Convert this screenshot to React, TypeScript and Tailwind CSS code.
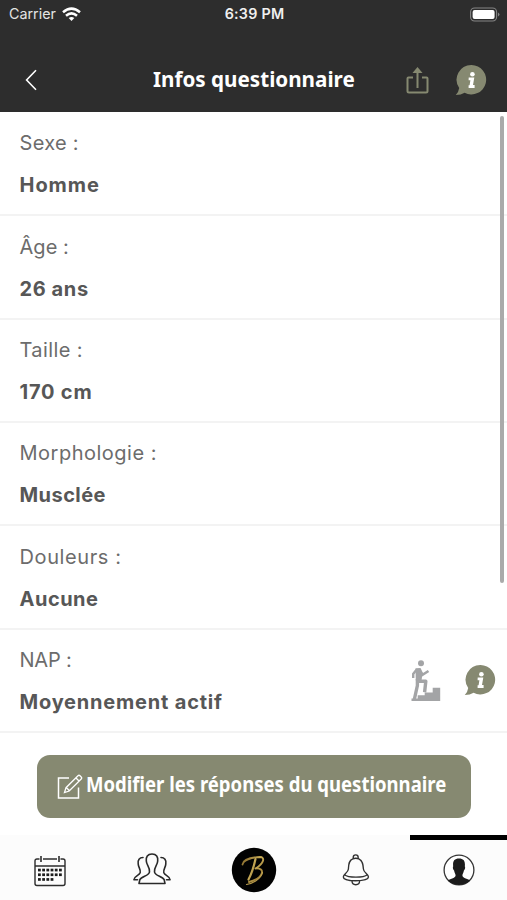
import React from "react";

const rows = [
  { label: "Sexe :", value: "Homme", lt: "tracking-[0.3px]", vt: "tracking-[0.95px]" },
  { label: "Âge :", value: "26 ans", lt: "tracking-[0.05px]", vt: "tracking-[0.6px]" },
  { label: "Taille :", value: "170 cm", lt: "tracking-[0.4px]", vt: "tracking-[0.8px]" },
  { label: "Morphologie :", value: "Musclée", lt: "tracking-[0.5px]", vt: "tracking-[0.45px]" },
  { label: "Douleurs :", value: "Aucune", lt: "tracking-[0.6px]", vt: "tracking-[0.5px]" },
  { label: "NAP :", value: "Moyennement actif", lt: "tracking-[-0.2px]", vt: "tracking-[0.8px]", icons: true },
];

function InfoBubble() {
  return (
    <svg width="32" height="32" viewBox="0 0 32 32" className="shrink-0">
      <path d="M16.5 1A14.7 14.7 0 1 1 9.6 28.7Q6 31 .8 31Q3.7 28 4.2 24A14.7 14.7 0 0 1 16.5 1Z" fill="#868971" />
      <g fill="#fff">
        <circle cx="17.4" cy="10.2" r="2.3" />
        <path d="M13.7 13.4h5.6l-1.3 7.7h1.6v2.8h-6v-2.6h1l.8-5.1h-1.8z" />
      </g>
    </svg>
  );
}

function StatusBar() {
  return (
    <div className="grid h-7 grid-cols-3 items-center pl-[9px] pr-[7px] text-[14px] leading-[28px] text-white">
      <div className="flex items-center gap-[6px]">
        <span className="text-[14.3px] text-[#e4e4e4]">Carrier</span>
        <svg width="19" height="15" viewBox="0 0 19 15" fill="none" stroke="#fff" strokeWidth="2.5">
          <path d="M1 5.2Q9.5-2 18 5.2" />
          <path d="M4 8.8q5.5-4.8 11 0" />
          <path d="M6.7 11.1Q9.5 8.8 12.3 11.1L9.5 14z" fill="#fff" stroke="none" />
        </svg>
      </div>
      <span className="text-center text-[14.3px] font-semibold tracking-[0.25px] text-[#f0f0f0]">6:39 PM</span>
      <svg className="justify-self-end" width="30" height="15" viewBox="0 0 30 15">
        <rect x=".6" y="1" width="26" height="13" rx="4" fill="none" stroke="#858585" strokeWidth="1.1" />
        <rect x="2.6" y="3" width="22" height="9" rx="2" fill="#fff" />
        <path d="M28 5.5q3 2 0 4z" fill="#858585" />
      </svg>
    </div>
  );
}

function NavBar() {
  return (
    <div className="flex h-[84px] items-start pt-[33px]">
      <svg className="ml-[25px] mt-[7px]" width="13" height="24" viewBox="0 0 13 24" fill="none" stroke="#fff" strokeWidth="1.6">
        <path d="M11 2.3L1.6 12 11 21.7" />
      </svg>
      <h1 className="ml-[115px] w-[202px] whitespace-nowrap font-['Noto_Sans'] text-[22px] font-bold leading-[34px] text-white">
        <span className="inline-block origin-left scale-x-[0.938]">Infos questionnaire</span>
      </h1>
      <svg className="ml-[51px] mt-[5px]" width="23" height="29" viewBox="0 0 23 29" fill="none" stroke="#868971" strokeWidth="2">
        <path d="M7 11.5H2.5q-1 0-1 1V25q0 1.5 1.5 1.5h17q1.5 0 1.5-1.5V12.5q0-1-1-1H16M11.5 22V3" />
        <path d="M6.5 7l5-6 5 6z" fill="#868971" stroke="none" />
      </svg>
      <div className="ml-[26px] mt-[3px]"><InfoBubble /></div>
    </div>
  );
}

function StairsClimber() {
  return (
    <svg width="30" height="42" viewBox="0 0 30 42" fill="none" stroke="#a3a4a6">
      <circle cx="10" cy="3.2" r="3" fill="#a3a4a6" stroke="none" />
      <path d="M5.5 9.8L2.2 14v4" strokeWidth="2.4" />
      <path d="M9 11.5L11.5 14.8 17.5 11" strokeWidth="2.6" />
      <path d="M4.5 8.3l5-.3 2.2 4.5-1.2 8H4.8z" fill="#a3a4a6" stroke="none" />
      <path d="M6.4 19v6.5L3.2 40M7.5 21.2h7.3l-1.2 11" strokeWidth="3.4" strokeLinejoin="round" />
      <path d="M.5 41v-2.5h6.2V35.2h7v-2.7h8V27.8h7.5V41z" fill="#a3a4a6" stroke="none" />
    </svg>
  );
}

function EditIcon() {
  return (
    <svg className="shrink-0" width="26" height="26" viewBox="0 0 26 26" fill="none" stroke="#fff" strokeWidth="1.5">
      <path d="M12 4H1.5v20h20V13.5" />
      <path d="M7.5 18.5L9 13.7 21 1.8q1-1 2 0l1.2 1.2q1 1 0 2L12.2 17zM19 4l3 3M9.5 13.8l3 3" strokeWidth="1.3" />
    </svg>
  );
}

function CalendarIcon() {
  const dots: [number, number][] = [];
  [14.7, 19.4, 24.1].forEach((y, r) => {
    for (let i = 0; i < (r === 2 ? 4 : 6); i++) dots.push([4 + i * 4.2, y]);
  });
  return (
    <svg width="32" height="32" viewBox="0 0 32 32" fill="none" stroke="#2c2c2c">
      <path d="M5.5 4H3q-2 0-2 2v22.5q0 2 2 2h26q2 0 2-2V6q0-2-2-2h-2.5M9 4h14M1 11h30" strokeWidth="1.4" />
      <path d="M7 1v6M25 1v6" strokeWidth="1.6" />
      {dots.map(([x, y], i) => <rect key={i} x={x} y={y - 1} width="2.8" height="2.7" fill="#1c1c1c" stroke="none" />)}
    </svg>
  );
}

function GroupIcon() {
  return (
    <svg width="38" height="32" viewBox="0 0 38 32" fill="none" stroke="#292929" strokeWidth="1.6" strokeLinejoin="round" strokeLinecap="round">
      <path d="M19 1c-4.5 0-6.2 3-5.7 7 .2 4.5 3.8 6 3.2 11-.5 4-8.5 4.2-9.7 7.8L6 30.5h26l-.8-3.7c-1.2-3.6-9.2-3.8-9.7-7.8-.6-5 3-6.5 3.2-11 .5-4-1.2-7-5.7-7Z" />
      <path d="M10 4.5c-3.5 0-5.5 2.5-4.8 6.5.2 3.5 2.6 5 2 8.5C6.6 22.5 1 23 .9 26.7h3.6M28 4.5c3.5 0 5.5 2.5 4.8 6.5-.2 3.5-2.6 5-2 8.5.6 3 6.2 3.5 6.3 7.2h-3.6" />
    </svg>
  );
}

function BrandIcon() {
  return (
    <svg width="46" height="46" viewBox="0 0 46 46" fill="none" strokeLinecap="round" strokeLinejoin="round">
      <defs>
        <linearGradient id="gold" x1="0" y1="0" x2="1" y2="1">
          <stop offset="0" stopColor="#806326" />
          <stop offset=".45" stopColor="#c9ad58" />
          <stop offset="1" stopColor="#8a6825" />
        </linearGradient>
      </defs>
      <circle cx="23" cy="23" r="22.2" fill="#020202" />
      <g stroke="url(#gold)">
        <path d="M11.5 17.5C12 13 20 10.5 29 10c5 0 4.5 6-4.5 11.5 10-1 9 9-6.5 13.5" strokeWidth="1.9" />
        <path d="M24.5 12c-1.5 7-4 15-7 20.5" strokeWidth="2.2" />
        <path d="M15.5 37.5c6-1 14-5 16-12" strokeWidth="1.1" />
      </g>
    </svg>
  );
}

function BellIcon() {
  return (
    <svg width="28" height="32" viewBox="0 0 28 32" fill="none" stroke="#303030" strokeWidth="1.35" strokeLinejoin="round">
      <circle cx="13.7" cy="3.4" r="2.5" />
      <path d="M10.8 4.9C6.5 6.7 6.7 11 6.4 15c-.3 4-4.9 5-5.1 8 0 5 24.8 5 25.2 0-.2-3-4.8-4-5.1-8-.3-4-.4-8.3-4.6-10.1-1.8-.8-4.3-.8-6 0Z" fill="#fcfcfc" />
      <path d="M2.4 20.7c4 3.2 19 3.2 23 0M10 26.8c0 5.2 7.6 5.2 7.6 0" />
    </svg>
  );
}

function ProfileIcon() {
  return (
    <svg width="32" height="32" viewBox="0 0 32 32">
      <circle cx="16" cy="16" r="14.9" fill="#fff" stroke="#353535" strokeWidth="1.3" />
      <path d="M16 4.5c-5 0-6.4 3-5.8 8-.8.5 0 3.5.9 4 .3 2.4 1.4 3 1.5 5-.2 3-6.2 3-7.8 5.3 6 5.5 16.4 5.5 22.4 0-1.6-2.3-7.6-2.3-7.8-5.3.1-2 1.2-2.6 1.5-5 .9-.5 1.7-3.5.9-4 .6-5-.8-8-5.8-8Z" fill="#1b1b1b" />
    </svg>
  );
}

export default function App() {
  return (
    <div className="flex h-[900px] w-[507px] flex-col overflow-hidden bg-white font-['Inter',sans-serif]">
      <header className="h-28 shrink-0 bg-[#2d2d2d]">
        <StatusBar />
        <NavBar />
      </header>
      <main className="relative h-[622px] shrink-0 pt-[0.8px]">
        {rows.map((r) => (
          <div key={r.label} className="flex h-[103.4px] justify-between border-b-2 border-[#f3f3f3] pl-[19.5px] pr-[11px]">
            <div className="pt-[17.4px] text-[20px] leading-[26px]">
              <p className={`text-[#6c6c6c] ${r.lt}`}>{r.label}</p>
              <p className={`mt-4 font-bold text-[#575757] ${r.vt}`}>{r.value}</p>
            </div>
            {r.icons && (
              <div className="flex items-start gap-[23px] pt-[30px]">
                <StairsClimber />
                <div className="mt-[4px]"><InfoBubble /></div>
              </div>
            )}
          </div>
        ))}
        <div className="absolute right-[3px] top-[4px] h-[467px] w-[4px] rounded-full bg-[#aaa]" />
      </main>
      <div className="h-[101px] shrink-0 pl-[37px] pt-[21px]">
        <button className="flex h-[63px] w-[434px] items-center rounded-[13px] bg-[#868971] pl-[20px] font-['Noto_Sans'] text-[20.5px] font-bold leading-[30px] text-white">
          <EditIcon />
          <span className="ml-[3px] inline-block origin-left scale-x-[0.904] whitespace-nowrap pb-[6px]">Modifier les réponses du questionnaire</span>
        </button>
      </div>
      <nav className="grid h-[65px] shrink-0 grid-cols-[99px_106px_97px_108px_97px] bg-[#fcfcfc]">
        <div className="flex justify-center pt-[20px]"><CalendarIcon /></div>
        <div className="flex justify-center pt-[18px]"><GroupIcon /></div>
        <div className="flex justify-center pt-[12px]"><BrandIcon /></div>
        <div className="flex justify-center pt-[19px]"><BellIcon /></div>
        <div className="flex justify-center border-t-[5px] border-black pt-[14px]"><ProfileIcon /></div>
      </nav>
    </div>
  );
}
